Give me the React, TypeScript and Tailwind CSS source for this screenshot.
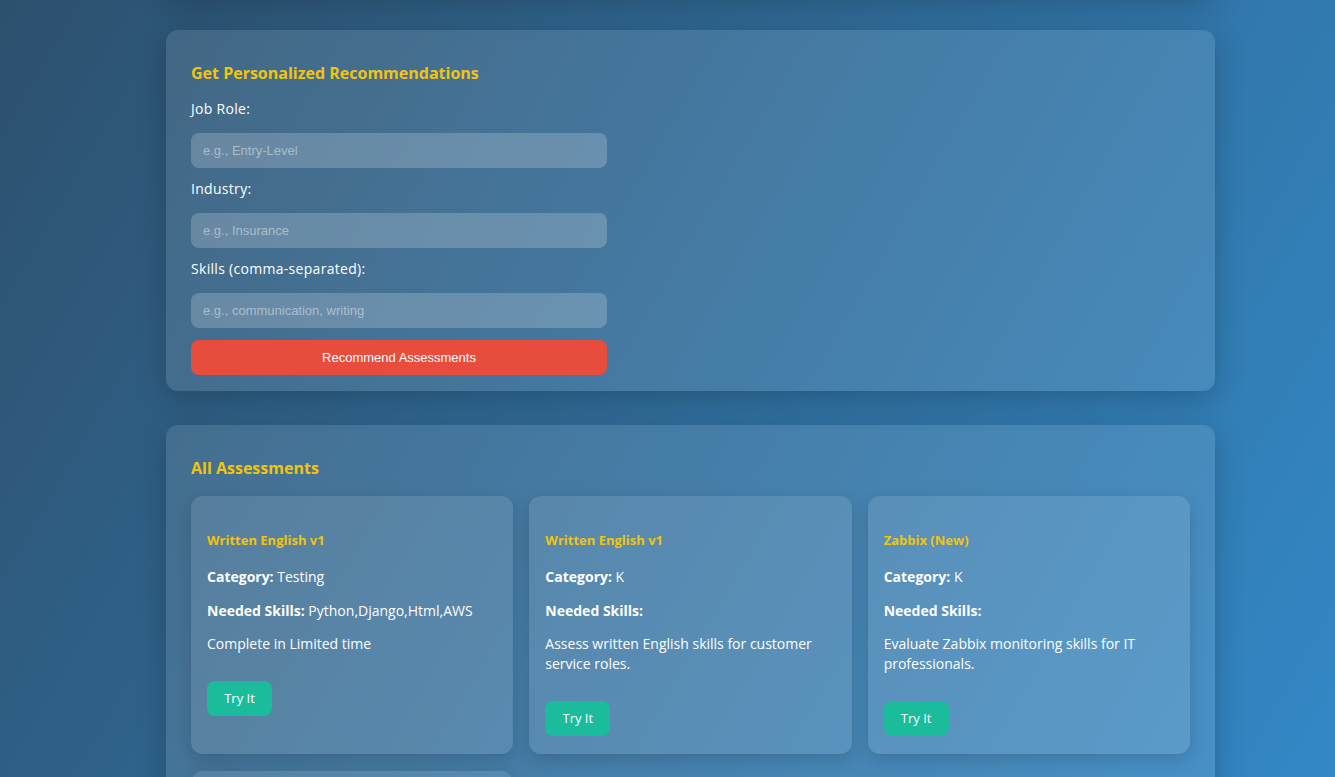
import React from "react";

type Assessment = {
  title: string;
  category: string;
  skills: string;
  description: string;
};

const assessments: Assessment[] = [
  { title: "Written English v1", category: "Testing", skills: "Python,Django,Html,AWS", description: "Complete in Limited time" },
  { title: "Written English v1", category: "K", skills: "", description: "Assess written English skills for customer service roles." },
  { title: "Zabbix (New)", category: "K", skills: "", description: "Evaluate Zabbix monitoring skills for IT professionals." },
  { title: "Written English v1", category: "K", skills: "", description: "Assess written English skills for customer service roles." },
];

function Field({ label, placeholder, first }: { label: string; placeholder: string; first?: boolean }) {
  return (
    <div className="flex flex-col">
      <label className={`text-[14px] leading-[20px] font-medium tracking-[0.3px] text-white ${first ? "" : "mt-[11px]"} mb-[14px]`}>{label}</label>
      <input
        placeholder={placeholder}
        className="w-[416px] h-[35px] rounded-[8px] bg-white/20 px-[12px] text-[13px] text-white outline-none placeholder:text-white/45 font-['Liberation_Sans',Arial,sans-serif]"
      />
    </div>
  );
}

function Card({ a }: { a: Assessment }) {
  return (
    <div className="flex flex-col rounded-[12px] bg-white/10 px-[16px] pt-[34px] pb-[18px] shadow-[0_6px_18px_rgba(0,0,0,0.15)]">
      <h3 className="text-[13px] leading-[20px] font-bold text-[#f1c40f] mb-[17px]">{a.title}</h3>
      <p className="text-[14px] leading-[20px] text-white mb-[14px]">
        <span className="font-bold">Category:</span> {a.category}
      </p>
      <p className="text-[14px] leading-[20px] text-white mb-[13px]">
        <span className="font-bold">Needed Skills:</span> {a.skills}
      </p>
      <p className="text-[14px] leading-[20px] text-white">{a.description}</p>
      <div className="mt-[27px]">
        <button className="h-[35px] w-[65px] rounded-[8px] bg-[#1abc9c] text-[13px] font-medium text-white">Try It</button>
      </div>
    </div>
  );
}

export default function App() {
  return (
    <div className="h-[777px] w-full overflow-hidden bg-[linear-gradient(120deg,#2d506e_0%,#306a96_45%,#3388c6_100%)] font-['Open_Sans','Noto_Sans',sans-serif]">
      <div className="ml-[166px] w-[1049px] flex flex-col gap-[34px]">
        <div className="-mt-[104px] h-[100px] rounded-[12px] bg-white/10 shadow-[0_8px_30px_rgba(0,0,0,0.22)]" />
        <section className="rounded-[12px] bg-white/10 px-[25px] pt-[32px] pb-[16px] shadow-[0_8px_30px_rgba(0,0,0,0.22)]">
          <h2 className="text-[16px] leading-[22px] font-bold text-[#f1c40f] mb-[15px]">Get Personalized Recommendations</h2>
          <Field label="Job Role:" placeholder="e.g., Entry-Level" first />
          <Field label="Industry:" placeholder="e.g., Insurance" />
          <Field label="Skills (comma-separated):" placeholder="e.g., communication, writing" />
          <button className="mt-[12px] h-[35px] w-[416px] rounded-[8px] bg-[#e74c3c] text-[13px] text-white font-['Liberation_Sans',Arial,sans-serif]">
            Recommend Assessments
          </button>
        </section>
        <section className="rounded-[12px] bg-white/10 px-[25px] pt-[32px] pb-[25px] shadow-[0_8px_30px_rgba(0,0,0,0.22)]">
          <h2 className="text-[16px] leading-[22px] font-bold text-[#f1c40f] mb-[17px]">All Assessments</h2>
          <div className="grid grid-cols-3 gap-x-[16px] gap-y-[17px]">
            {assessments.map((a, i) => (
              <Card key={i} a={a} />
            ))}
          </div>
        </section>
      </div>
    </div>
  );
}
